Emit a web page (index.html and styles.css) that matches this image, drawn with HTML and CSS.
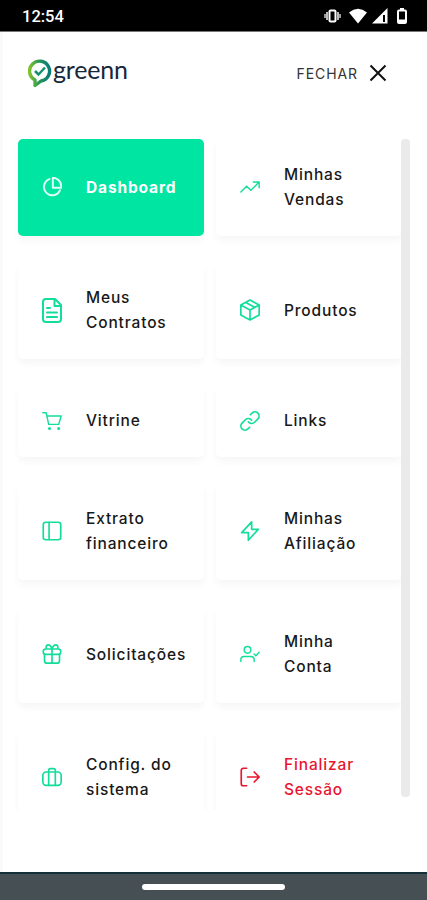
FILE: index.html
```html
<!DOCTYPE html>
<html lang="pt-BR">
<head>
  <meta charset="UTF-8">
  <meta name="viewport" content="width=device-width, initial-scale=1.0">
  <title>Greenn</title>
  <link rel="stylesheet" href="styles.css">
</head>
<body>
  <div class="status-bar">
    <span class="time">12:54</span>
    <svg class="status-icons" width="90" height="20" viewBox="0 0 90 20">
      <rect x="9.500" y="4.500" width="6" height="11" rx="1" fill="none" stroke="#fff" stroke-width="2"/>
      <path d="M7 6v8M18 6v8" stroke="#bbb" stroke-width="2"/>
      <path d="M5 8v4M20 8v4" stroke="#999" stroke-width="2"/>
      <path d="M29 6.500Q38 -.8 47 6.500L38 17.500z" fill="#fff"/>
      <path d="M52 17.500L67.500 2v15.500z" fill="#fff"/>
      <path d="M64 9v7" stroke="#000" stroke-width="2"/>
      <path d="M80 2h4v2h-4z" fill="#fff"/>
      <rect x="78" y="4.500" width="8" height="12.500" rx="1" fill="none" stroke="#fff" stroke-width="2"/>
      <path d="M78 13.500h8v3h-8z" fill="#fff"/>
    </svg>
  </div>

  <div class="menu">
    <header class="header">
      <div class="logo">
        <svg width="25" height="29" viewBox="0 0 25 29" fill="none">
          <defs>
            <linearGradient id="pin" x1="0" y1="0" x2="1" y2="0">
              <stop offset="0" stop-color="#7dc22c"/>
              <stop offset=".5" stop-color="#24965c"/>
              <stop offset="1" stop-color="#087b78"/>
            </linearGradient>
          </defs>
          <path d="M7 21v5.500l6-4.500a10 10 0 1 0-6-1z" stroke="url(#pin)" stroke-width="3.400" stroke-linejoin="round"/>
          <path d="M7 12l3.500 3.500 6.500-7" stroke="#16916f" stroke-width="2.500"/>
        </svg>
        <span>greenn</span>
      </div>
      <div class="close">
        <span>FECHAR</span>
        <svg width="18" height="18" viewBox="0 0 18 18"><path d="M1.500 1.500l15 15M16.500 1.500l-15 15" stroke="#111" stroke-width="2"/></svg>
      </div>
    </header>

    <div class="content">
      <nav class="grid">
        <a class="card active">
          <svg class="icon" viewBox="0 0 24 24"><path d="M9 2.500A10 10 0 1 0 21.500 16M13 1a10 10 0 0 1 10 10v2H13z"/></svg>
          <span>Dashboard</span>
        </a>
        <a class="card">
          <svg class="icon thin" viewBox="0 0 24 24"><path d="M1 18l7-7 5 5L22 7M16 6h7v7"/></svg>
          <span>Minhas<br>Vendas</span>
        </a>
        <a class="card">
          <svg class="icon tall" viewBox="0 0 20 25"><path d="M13 1H4a3 3 0 0 0-3 3v17a3 3 0 0 0 3 3h12a3 3 0 0 0 3-3V7zM12.500 1v7H19M5 10h3M5 14.500h10M5 19h10"/></svg>
          <span>Meus<br>Contratos</span>
        </a>
        <a class="card">
          <svg class="icon box" viewBox="0 0 24 26"><path d="M12 1l11 6v12l-11 6-11-6V7zM1 7l11 6 11-6M12 13v12M7 4l11 6"/></svg>
          <span>Produtos</span>
        </a>
        <a class="card short">
          <svg class="icon thin" viewBox="0 0 24 24"><path d="M1 2h4l3 14h12l3-10H6"/><circle cx="9" cy="21" r="1"/><circle cx="20" cy="21" r="1"/></svg>
          <span>Vitrine</span>
        </a>
        <a class="card short">
          <svg class="icon" viewBox="0 0 24 24"><path d="M10 13a5 5 0 0 0 7.540.540l4-4a5 5 0 0 0-7.070-7.070l-2 2M14 11a5 5 0 0 0-7.540-.540l-4 4a5 5 0 0 0 7.070 7.070l2-2"/></svg>
          <span>Links</span>
        </a>
        <a class="card">
          <svg class="icon" viewBox="0 0 24 24"><rect x="1.500" y="1.500" width="21" height="21" rx="3"/><path d="M8.500 2v20"/></svg>
          <span>Extrato<br>financeiro</span>
        </a>
        <a class="card">
          <svg class="icon" viewBox="0 0 24 24"><path d="M14 1L2 14h8L10 23l12-13h-8z"/></svg>
          <span>Minhas<br>Afiliação</span>
        </a>
        <a class="card">
          <svg class="icon" viewBox="0 0 24 24"><path d="M3 12v8a3 3 0 0 0 3 3h12a3 3 0 0 0 3-3v-8M12 6v17M12 6C10-1 4 0 5 5M12 6c2-7 8-6 7-1"/><rect x="1.500" y="6" width="21" height="6.500" rx="3"/></svg>
          <span>Solicitações</span>
        </a>
        <a class="card">
          <svg class="icon thin" viewBox="0 0 24 24"><circle cx="9" cy="7" r="4"/><path d="M1 21v-2a4 4 0 0 1 4-4h8a4 4 0 0 1 4 4v2M17 12l2 2 4-4"/></svg>
          <span>Minha<br>Conta</span>
        </a>
        <a class="card">
          <svg class="icon" viewBox="0 0 24 24"><rect x="1" y="6" width="22" height="16" rx="4"/><path d="M8 22V4q0-2 2-2h4q2 0 2 2v18"/></svg>
          <span>Config. do<br>sistema</span>
        </a>
        <a class="card logout">
          <svg class="icon" viewBox="0 0 24 24"><path d="M8 1.500H4a2.500 2.500 0 0 0-2.500 2.500v16A2.500 2.500 0 0 0 4 22.500h4M9 12h14M17 6l6 6-6 6"/></svg>
          <span>Finalizar<br>Sessão</span>
        </a>
      </nav>
      <div class="scrollbar"></div>
    </div>
  </div>

  <div class="bottom-bar"><div class="handle"></div></div>
</body>
</html>
```

FILE: styles.css
```css
* {
  box-sizing: border-box;
}
body {
  margin: 0;
  height: 900px;
  display: flex;
  flex-direction: column;
  overflow: hidden;
  font-family: Inter, sans-serif;
  background: #fff;
}
.status-bar {
  height: 32px;
  padding: 1px 17px 0 22px;
  display: flex;
  align-items: center;
  justify-content: space-between;
  background: #000;
  border-bottom: 1px solid #777;
  color: #fff;
}
.time {
  font-family: Roboto, sans-serif;
  font-size: 16.500px;
  font-weight: 500;
}
.menu {
  height: 840px;
  border-left: 3px solid #fafafa;
}
.header {
  height: 107px;
  padding: 27px 40px 0 25px;
  display: flex;
  align-items: flex-start;
  justify-content: space-between;
}
.logo {
  display: flex;
  height: 29px;
}
.logo span {
  font-family: Lato, sans-serif;
  font-size: 25px;
  line-height: 20px;
  letter-spacing: -0.2px;
  color: #17283a;
}
.close {
  display: flex;
  align-items: center;
  gap: 11px;
  height: 28px;
  font-size: 14px;
  letter-spacing: 0.9px;
  color: #333;
}
.content {
  display: flex;
  height: 671px;
}
.grid {
  width: 398px;
  height: 671px;
  padding-left: 15px;
  display: grid;
  grid-template-columns: 186px 186px;
  column-gap: 12px;
  row-gap: 26px;
  align-content: start;
  overflow: hidden;
}
.card {
  height: 97px;
  padding: 0 0 1px 24px;
  display: flex;
  align-items: center;
  gap: 24px;
  border-radius: 5px;
  background: #fff;
  box-shadow: 0 5px 7px rgba(0, 0, 0, 0.035);
  color: #181818;
  font-size: 15.500px;
  font-weight: 500;
  line-height: 25px;
  letter-spacing: 0.85px;
}
.short {
  height: 72px;
}
.active {
  background: #00e5a2;
  color: #fff;
  font-weight: 700;
}
.icon {
  flex: none;
  width: 20px;
  height: 20px;
  fill: none;
  stroke: #13dd9b;
  stroke-width: 2;
  stroke-linecap: round;
  stroke-linejoin: round;
}
.thin {
  stroke-width: 1.700;
}
.tall {
  height: 25px;
}
.box {
  height: 22px;
}
.active .icon {
  stroke: #dffff4;
  stroke-width: 2.400;
}
.logout {
  color: #e9152f;
}
.logout .icon {
  stroke: #e9152f;
}
.scrollbar {
  width: 9px;
  height: 658px;
  border-radius: 4px;
  background: #eaeaea;
}
.bottom-bar {
  height: 28px;
  display: flex;
  align-items: center;
  justify-content: center;
  background: #454f54;
  border-top: 2px solid #142f38;
}
.handle {
  width: 143px;
  height: 6px;
  margin-bottom: 1px;
  border-radius: 3px;
  background: #fff;
}
```
